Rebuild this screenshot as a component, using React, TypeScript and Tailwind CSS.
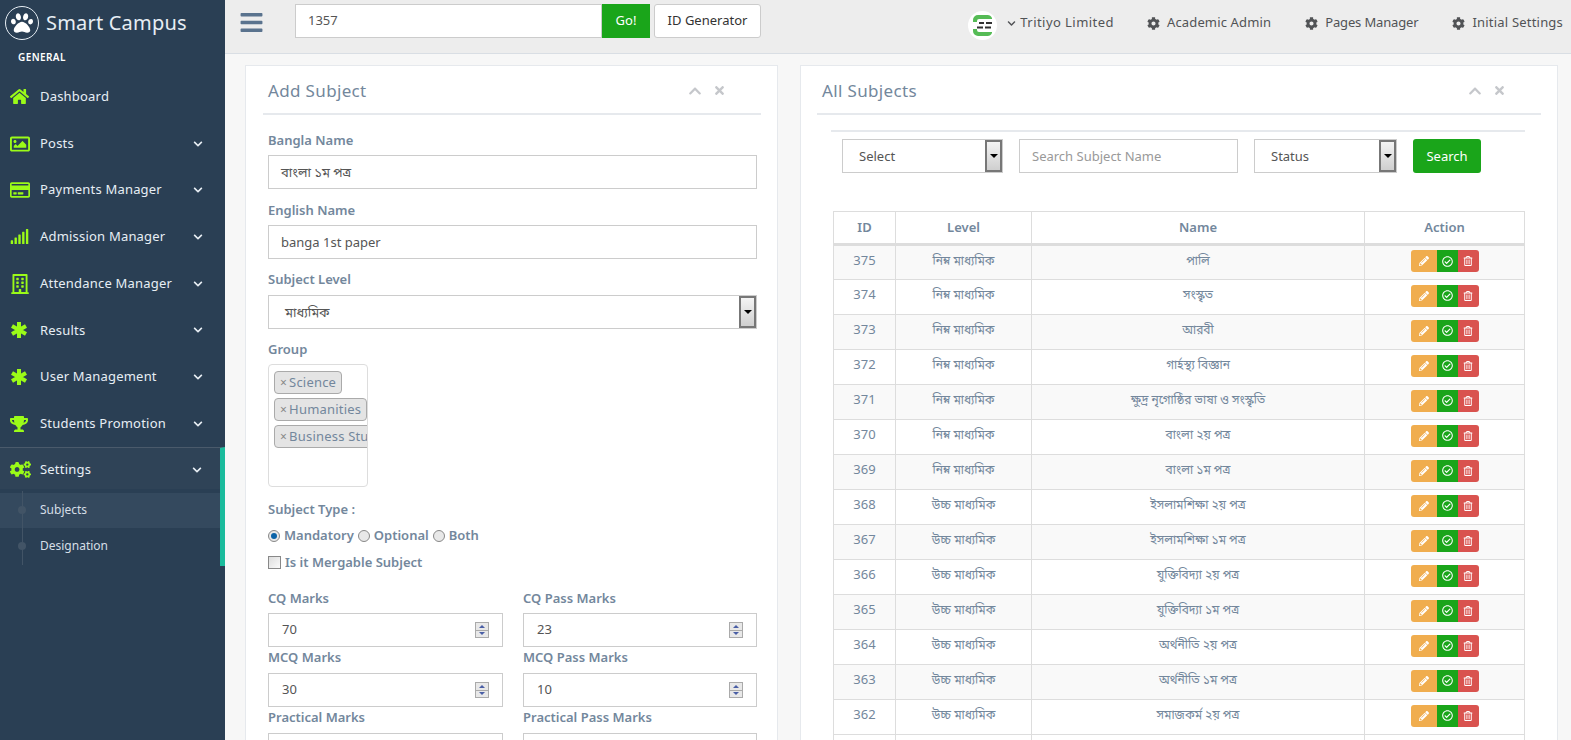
import type { ReactNode } from "react";
import {
  FaBars,
  FaChevronDown,
  FaChevronUp,
  FaCog,
  FaCogs,
  FaHome,
  FaPaw,
  FaPencilAlt,
  FaRegBuilding,
  FaRegCheckCircle,
  FaRegCreditCard,
  FaRegImage,
  FaRegTrashAlt,
  FaSignal,
  FaTimes,
  FaTrophy,
} from "react-icons/fa";

const FONT = "font-['Noto_Sans','Noto_Sans_Bengali','Liberation_Sans',sans-serif]";

// the chunky asterisk of the old icon font
const Asterisk = () => (
  <svg width="18" height="18" viewBox="0 0 18 18" stroke="currentColor" strokeWidth="4">
    <path d="M9 1v16M2 5l14 8M16 5L2 13" />
  </svg>
);

const menu = [
  { label: "Dashboard", icon: <FaHome size={19} />, arrow: false },
  { label: "Posts", icon: <FaRegImage size={20} />, arrow: true },
  { label: "Payments Manager", icon: <FaRegCreditCard size={20} />, arrow: true },
  { label: "Admission Manager", icon: <FaSignal size={19} />, arrow: true },
  { label: "Attendance Manager", icon: <FaRegBuilding size={20} />, arrow: true },
  { label: "Results", icon: <Asterisk />, arrow: true },
  { label: "User Management", icon: <Asterisk />, arrow: true },
  { label: "Students Promotion", icon: <FaTrophy size={18} />, arrow: true },
];

const subjects = [
  ["375", "নিম্ন মাধ্যমিক", "পালি"],
  ["374", "নিম্ন মাধ্যমিক", "সংস্কৃত"],
  ["373", "নিম্ন মাধ্যমিক", "আরবী"],
  ["372", "নিম্ন মাধ্যমিক", "গার্হস্থ্য বিজ্ঞান"],
  ["371", "নিম্ন মাধ্যমিক", "ক্ষুদ্র নৃগোষ্ঠির ভাষা ও সংস্কৃতি"],
  ["370", "নিম্ন মাধ্যমিক", "বাংলা ২য় পত্র"],
  ["369", "নিম্ন মাধ্যমিক", "বাংলা ১ম পত্র"],
  ["368", "উচ্চ মাধ্যমিক", "ইসলামশিক্ষা ২য় পত্র"],
  ["367", "উচ্চ মাধ্যমিক", "ইসলামশিক্ষা ১ম পত্র"],
  ["366", "উচ্চ মাধ্যমিক", "যুক্তিবিদ্যা ২য় পত্র"],
  ["365", "উচ্চ মাধ্যমিক", "যুক্তিবিদ্যা ১ম পত্র"],
  ["364", "উচ্চ মাধ্যমিক", "অর্থনীতি ২য় পত্র"],
  ["363", "উচ্চ মাধ্যমিক", "অর্থনীতি ১ম পত্র"],
  ["362", "উচ্চ মাধ্যমিক", "সমাজকর্ম ২য় পত্র"],
];

const Label = ({ children, className = "" }: { children: ReactNode; className?: string }) => (
  <p className={`text-[13px] font-semibold leading-[18px] text-[#73879c] ${className}`}>{children}</p>
);

const TextBox = ({ children }: { children: ReactNode }) => (
  <div className="flex h-[34px] w-full items-center border border-[#ccc] bg-white px-3 pt-[1px] text-[13px] text-[#555]">
    {children}
  </div>
);

// old style select arrow
const SelectArrow = () => (
  <span className="flex h-[32px] w-[17px] shrink-0 items-center justify-center border-2 border-[#777] bg-gradient-to-b from-[#f4f4f4] to-[#cfcfcf]">
    <span className="h-0 w-0 border-x-[4px] border-t-[4px] border-x-transparent border-t-black" />
  </span>
);

const SelectBox = ({ children, className = "" }: { children: ReactNode; className?: string }) => (
  <div
    className={`flex h-[34px] items-center justify-between border border-[#ccc] bg-white pl-4 text-[13px] text-[#555] ${className}`}
  >
    <span className="pt-[1px]">{children}</span>
    <SelectArrow />
  </div>
);

const Spinner = () => (
  <span className="flex h-[16px] w-[14px] flex-col border border-[#aaa] bg-[#e8e8e8]">
    <span className="flex flex-1 items-center justify-center border-b border-[#aaa]">
      <span className="h-0 w-0 border-x-[3px] border-b-[3px] border-x-transparent border-b-[#4a5fa5]" />
    </span>
    <span className="flex flex-1 items-center justify-center">
      <span className="h-0 w-0 border-x-[3px] border-t-[3px] border-x-transparent border-t-[#4a5fa5]" />
    </span>
  </span>
);

const NumberBox = ({ value }: { value?: string }) => (
  <div className="flex h-[34px] w-full items-center justify-between border border-[#ccc] bg-white px-[13px] text-[13px] text-[#555]">
    <span>{value}</span>
    <Spinner />
  </div>
);

const Tag = ({ children }: { children: ReactNode }) => (
  <span className="flex h-[23px] w-max items-center gap-[2px] rounded-[4px] border border-[#aaa] bg-[#e4e4e4] px-[5px] text-[13px] tracking-[0.2px] whitespace-nowrap text-[#73879c]">
    <span className="text-[12px] text-[#888]">×</span>
    {children}
  </span>
);

const Radio = ({ checked = false }: { checked?: boolean }) => (
  <span className="flex h-[12px] w-[12px] items-center justify-center rounded-full border border-[#888] bg-[#e8e8e8]">
    {checked && <span className="h-[6px] w-[6px] rounded-full bg-[#0b63a8]" />}
  </span>
);

const PanelHead = ({ title }: { title: string }) => (
  <div className="flex h-[49px] items-center justify-between border-b-2 border-[#e6e9ed] pt-[1px] pr-[35px] pl-[5px]">
    <h2 className="text-[17px] leading-none font-normal tracking-[0.35px] text-[#73879c]">{title}</h2>
    <div className="flex items-center gap-[11px] pt-[1px] text-[#c5c7cb]">
      <FaChevronUp size={14} />
      <FaTimes size={13} />
    </div>
  </div>
);

const App = () => {
  return (
    <div className={`flex h-[740px] w-[1571px] overflow-hidden bg-[#f7f7f7] ${FONT}`}>
      {/* Sidebar */}
      <aside className="w-[225px] shrink-0 bg-[#2a3f54] text-[#e7eef4]">
        <div className="flex h-[46px] items-center pl-[5px]">
          <span className="flex h-[34px] w-[34px] items-center justify-center rounded-full border border-[#e7eef4] text-white">
            <FaPaw size={22} />
          </span>
          <span className="ml-[7px] text-[20px] leading-none tracking-[0.2px]">Smart Campus</span>
        </div>
        <p className="mt-[4px] h-[23px] pl-[18px] text-[10px] leading-[14px] font-semibold tracking-[0.4px] text-white">
          GENERAL
        </p>

        {menu.map((item, i) => (
          <div
            key={item.label}
            className={`flex h-[46.7px] items-center pr-[22px] pl-[10px] ${i > 0 ? "pt-[1px]" : ""}`}
          >
            <span className="flex w-[30px] text-[#9bfb18]">{item.icon}</span>
            <span className="flex-1 text-[13px] tracking-[0.2px]">{item.label}</span>
            {item.arrow && <FaChevronDown size={10} />}
          </div>
        ))}

        {/* Active group */}
        <div className="border-t border-r-[5px] border-t-[#4a5a6b] border-r-[#1abb9c]">
          <div className="flex h-[41px] items-center bg-[#2f4357] pt-[3px] pr-[18px] pl-[10px]">
            <span className="flex w-[30px] text-[#9bfb18]">
              <FaCogs size={21} />
            </span>
            <span className="flex-1 text-[13px] tracking-[0.2px]">Settings</span>
            <FaChevronDown size={10} />
          </div>
          <div className="relative pt-[4px] pb-[1px] text-[12px] text-[#d5dee6]">
            <span className="absolute top-[2px] bottom-[1px] left-[22px] w-px bg-[#425466]" />
            <div className="flex h-[35px] items-center bg-[#34495e] pl-[40px]">
              <span className="absolute left-[18px] h-[8px] w-[8px] rounded-full bg-[#425466]" />
              Subjects
            </div>
            <div className="flex h-[37px] items-center pl-[40px]">
              <span className="absolute left-[18px] h-[8px] w-[8px] rounded-full bg-[#425466]" />
              Designation
            </div>
          </div>
        </div>
      </aside>

      <div className="min-w-0 flex-1">
        {/* Top bar */}
        <header className="flex h-[54px] items-start border-b border-[#d9dee4] bg-[#ededed] pt-[4px] pr-[8px] pl-[14px] text-[13px] text-[#515356]">
          <FaBars size={25} className="mt-[6px] text-[#5a738e]" />
          <div className="ml-[31px] flex h-[34px] w-[307px] items-center border border-[#ccc] bg-white px-3 text-[#555]">
            1357
          </div>
          <span className="flex h-[34px] w-[48px] items-center justify-center bg-[#1aa51a] text-white">Go!</span>
          <span className="ml-[4px] flex h-[34px] w-[107px] items-center justify-center rounded-[3px] border border-[#ccc] bg-white text-[#333]">
            ID Generator
          </span>
          <div className="ml-auto flex h-[38px] items-center self-start">
            <svg width="29" height="29" viewBox="0 0 29 29" className="mt-[4px] mr-[10px]">
              <circle cx="14.5" cy="14.5" r="14.5" fill="#fff" />
              <path d="M5 11V9a5 5 0 0 1 5-5h9a5 5 0 0 1 5 3v1H11a2 2 0 0 0-2 2v1z" fill="#55bb55" />
              <path d="M5 18v2a5 5 0 0 0 5 5h9a5 5 0 0 0 5-3v-1H11a2 2 0 0 1-2-2v-1z" fill="#55bb55" />
              <path d="M11 11h5v2h-5zM18 11h6v2h-6zM9 15.5h6v2H9zM17 15.5h6v2h-6z" fill="#333" />
            </svg>
            <FaChevronDown size={9} className="mr-[4px]" />
            <span className="tracking-[0.45px]">Tritiyo Limited</span>
            <span className="ml-[33px] flex items-center gap-[7px] tracking-[0.15px]">
              <FaCog size={13} /> Academic Admin
            </span>
            <span className="ml-[34px] flex items-center gap-[7px] tracking-[-0.15px]">
              <FaCog size={13} /> Pages Manager
            </span>
            <span className="ml-[34px] flex items-center gap-[7px] tracking-[0.2px]">
              <FaCog size={13} /> Initial Settings
            </span>
          </div>
        </header>

        <main className="flex gap-[22px] pt-[11px] pr-[13px] pl-[20px]">
          {/* Add Subject */}
          <section className="h-[700px] w-[533px] shrink-0 border border-[#e6e9ed] bg-white pr-[16px] pl-[17px]">
            <PanelHead title="Add Subject" />
            <div className="box-content w-[489px] pt-[16px] pl-[5px]">
              <Label className="mb-[6px]">Bangla Name</Label>
              <TextBox>বাংলা ১ম পত্র</TextBox>
              <Label className="mt-[12px] mb-[6px]">English Name</Label>
              <TextBox>banga 1st paper</TextBox>
              <Label className="mt-[11px] mb-[7px]">Subject Level</Label>
              <SelectBox>মাধ্যমিক</SelectBox>
              <Label className="mt-[11px] mb-[6px]">Group</Label>
              <div className="flex h-[123px] w-[100px] flex-col gap-[4px] overflow-hidden rounded-[4px] border border-[#ddd] px-[5px] py-[6px]">
                <Tag>Science</Tag>
                <Tag>Humanities</Tag>
                <Tag>Business Studies</Tag>
              </div>
              <Label className="mt-[13px]">Subject Type :</Label>
              <div className="mt-[8px] flex items-center gap-[4px] text-[13px] font-semibold text-[#73879c]">
                <Radio checked />
                <span>Mandatory</span>
                <Radio />
                <span>Optional</span>
                <Radio />
                <span>Both</span>
              </div>
              <div className="mt-[7px] flex items-center gap-[4px] text-[13px] font-semibold text-[#73879c]">
                <span className="h-[13px] w-[13px] border border-[#888] bg-gradient-to-br from-[#ddd] to-[#fafafa]" />
                Is it Mergable Subject
              </div>

              <div className="mt-[17px] grid grid-cols-[235px_234px] gap-x-[20px]">
                <Label className="mb-[6px]">CQ Marks</Label>
                <Label className="mb-[6px]">CQ Pass Marks</Label>
                <NumberBox value="70" />
                <NumberBox value="23" />
                <Label className="mt-[1px] mb-[7px]">MCQ Marks</Label>
                <Label className="mt-[1px] mb-[7px]">MCQ Pass Marks</Label>
                <NumberBox value="30" />
                <NumberBox value="10" />
                <Label className="mt-[1px] mb-[7px]">Practical Marks</Label>
                <Label className="mt-[1px] mb-[7px]">Practical Pass Marks</Label>
                <NumberBox />
                <NumberBox />
              </div>
            </div>
          </section>

          {/* All Subjects */}
          <section className="h-[700px] min-w-0 flex-1 border border-[#e6e9ed] bg-white px-[16px]">
            <PanelHead title="All Subjects" />
            <div className="mt-[15px] ml-[14px] w-[694px] border-t-2 border-[#e6e9ed]" />
            <div className="mt-[7px] ml-[25px] flex items-center">
              <SelectBox className="w-[161px]">Select</SelectBox>
              <div className="ml-[16px] flex h-[34px] w-[219px] items-center border border-[#ccc] px-3 pt-[1px] text-[13px] text-[#999]">
                Search Subject Name
              </div>
              <SelectBox className="ml-[16px] w-[143px]">Status</SelectBox>
              <span className="ml-[16px] flex h-[34px] w-[68px] items-center justify-center rounded-[3px] bg-[#1aa51a] pt-[1px] text-[13px] text-white">
                Search
              </span>
            </div>

            <table className="mt-[38px] ml-[16px] w-[692px] table-fixed border-collapse text-[13px] text-[#73879c]">
              <thead>
                <tr className="h-[33px] border-b-[3px] border-[#ddd] font-semibold">
                  <th className="w-[62px] border border-[#ddd] font-semibold">ID</th>
                  <th className="w-[136px] border border-[#ddd] font-semibold">Level</th>
                  <th className="w-[333px] border border-[#ddd] font-semibold">Name</th>
                  <th className="border border-[#ddd] font-semibold">Action</th>
                </tr>
              </thead>
              <tbody>
                {subjects.map((row, i) => (
                  <tr key={row[0]} className={`h-[35px] ${i % 2 === 0 ? "bg-[#f9f9f9]" : "bg-white"}`}>
                    <td className="border border-[#ddd] pb-[4px] text-center">{row[0]}</td>
                    <td className="border border-[#ddd] pb-[4px] text-center text-[12px]">{row[1]}</td>
                    <td className="border border-[#ddd] pb-[4px] text-center text-[12px]">{row[2]}</td>
                    <td className="border border-[#ddd] pb-[3px]">
                      <div className="flex justify-center text-white">
                        <span className="flex h-[22px] w-[26px] items-center justify-center rounded-l-[3px] bg-[#f0ad4e]">
                          <FaPencilAlt size={10} />
                        </span>
                        <span className="flex h-[22px] w-[21px] items-center justify-center bg-[#1aa51a]">
                          <FaRegCheckCircle size={11} />
                        </span>
                        <span className="flex h-[22px] w-[21px] items-center justify-center rounded-r-[3px] bg-[#d9534f]">
                          <FaRegTrashAlt size={10} />
                        </span>
                      </div>
                    </td>
                  </tr>
                ))}
                {/* next row only starts at the bottom of the window */}
                <tr className="h-[35px] bg-white">
                  <td className="border border-[#ddd]" />
                  <td className="border border-[#ddd]" />
                  <td className="border border-[#ddd]" />
                  <td className="border border-[#ddd]" />
                </tr>
              </tbody>
            </table>
          </section>
        </main>
      </div>
    </div>
  );
};

export default App;
